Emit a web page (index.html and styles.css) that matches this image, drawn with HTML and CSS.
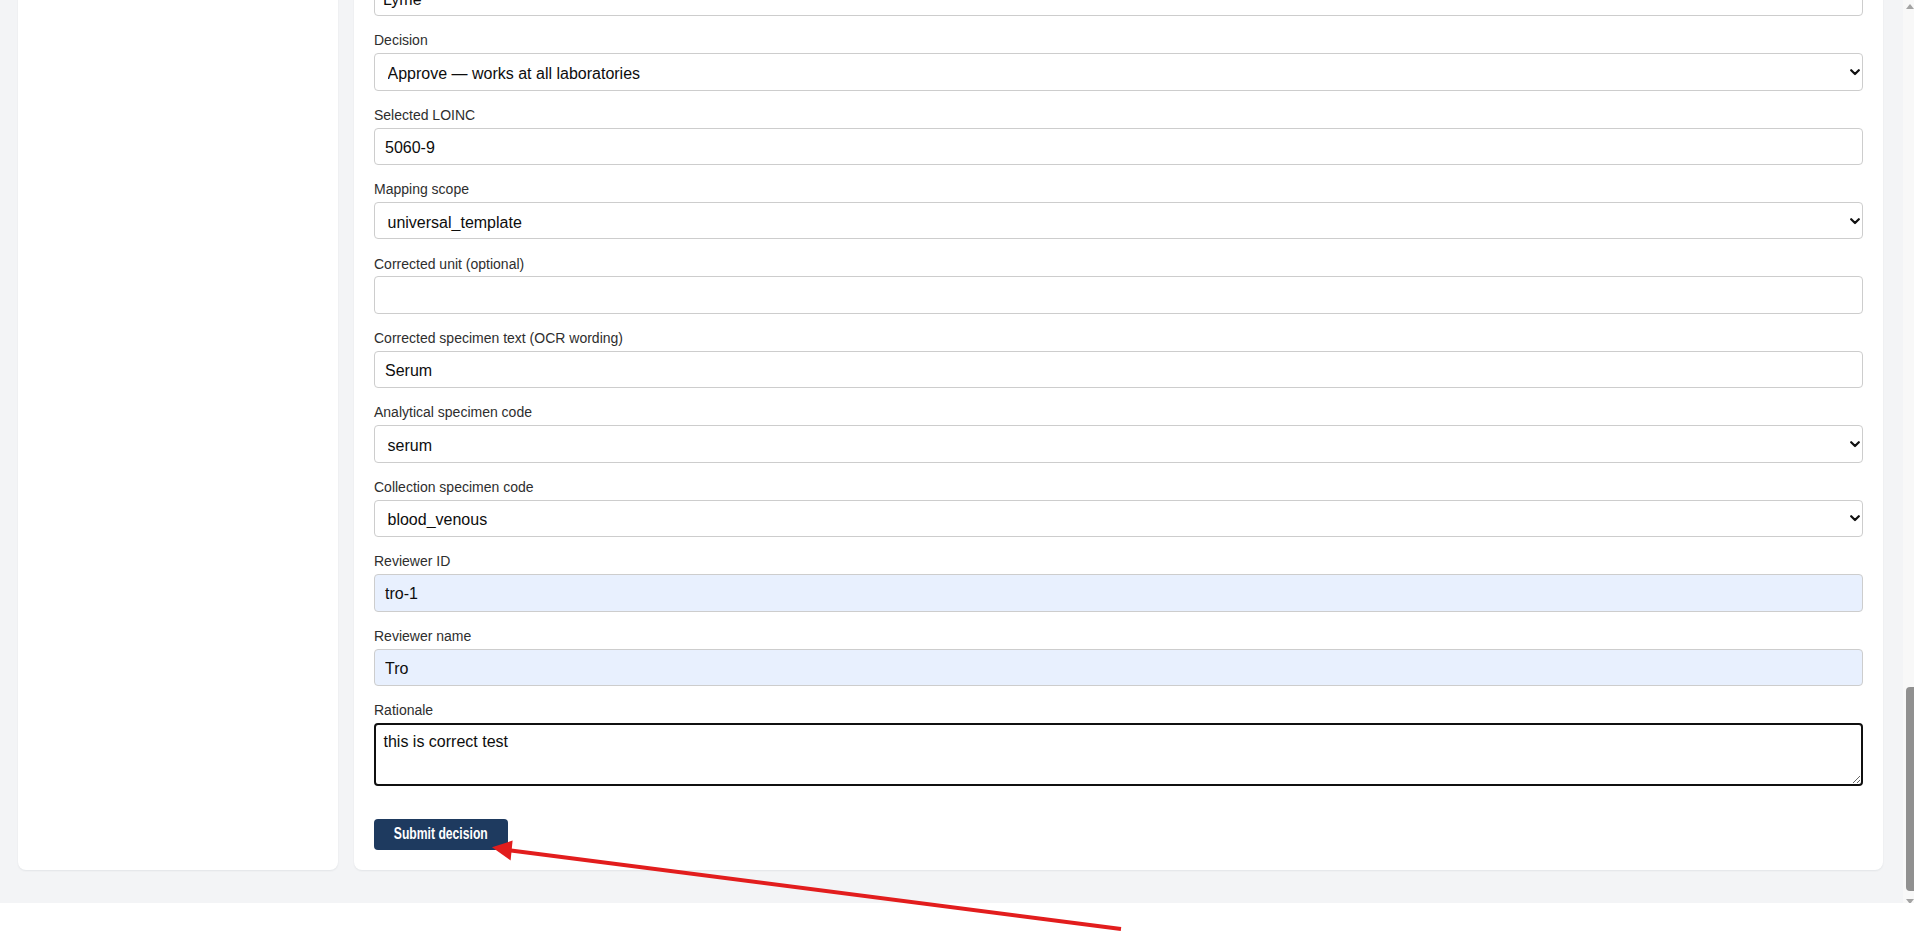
FILE: index.html
```html
<!DOCTYPE html>
<html lang="en">
<head>
<meta charset="utf-8">
<title>Review decision</title>
<link rel="stylesheet" href="styles.css">
</head>
<body>
<div class="screen">
  <div class="viewport">
    <div class="page">
      <div class="layout">
        <aside class="card sidebar"></aside>
        <main class="card main">
          <form class="form">
            <div class="field">
              <input class="control control-first" type="text" value="Lyme">
            </div>
            <div class="field">
              <label class="field-label">Decision</label>
              <div class="select-wrap">
                <select class="control control-select"><option>Approve — works at all laboratories</option></select>
                <svg class="chevron" viewBox="0 0 10 7"><path d="M1.2 1.2 L5 5 L8.8 1.2" fill="none" stroke="#111" stroke-width="2.2" stroke-linecap="round" stroke-linejoin="round"/></svg>
              </div>
            </div>
            <div class="field">
              <label class="field-label">Selected LOINC</label>
              <input class="control" type="text" value="5060-9">
            </div>
            <div class="field">
              <label class="field-label">Mapping scope</label>
              <div class="select-wrap">
                <select class="control control-select"><option>universal_template</option></select>
                <svg class="chevron" viewBox="0 0 10 7"><path d="M1.2 1.2 L5 5 L8.8 1.2" fill="none" stroke="#111" stroke-width="2.2" stroke-linecap="round" stroke-linejoin="round"/></svg>
              </div>
            </div>
            <div class="field">
              <label class="field-label">Corrected unit (optional)</label>
              <input class="control" type="text" value="">
            </div>
            <div class="field">
              <label class="field-label">Corrected specimen text (OCR wording)</label>
              <input class="control" type="text" value="Serum">
            </div>
            <div class="field">
              <label class="field-label">Analytical specimen code</label>
              <div class="select-wrap">
                <select class="control control-select"><option>serum</option></select>
                <svg class="chevron" viewBox="0 0 10 7"><path d="M1.2 1.2 L5 5 L8.8 1.2" fill="none" stroke="#111" stroke-width="2.2" stroke-linecap="round" stroke-linejoin="round"/></svg>
              </div>
            </div>
            <div class="field">
              <label class="field-label">Collection specimen code</label>
              <div class="select-wrap">
                <select class="control control-select"><option>blood_venous</option></select>
                <svg class="chevron" viewBox="0 0 10 7"><path d="M1.2 1.2 L5 5 L8.8 1.2" fill="none" stroke="#111" stroke-width="2.2" stroke-linecap="round" stroke-linejoin="round"/></svg>
              </div>
            </div>
            <div class="field">
              <label class="field-label">Reviewer ID</label>
              <input class="control control-filled" type="text" value="tro-1">
            </div>
            <div class="field">
              <label class="field-label">Reviewer name</label>
              <input class="control control-filled" type="text" value="Tro">
            </div>
            <div class="field">
              <label class="field-label">Rationale</label>
              <textarea class="control control-area">this is correct test</textarea>
            </div>
            <div class="actions">
              <button class="btn" type="button"><span class="btn-text">Submit decision</span></button>
            </div>
          </form>
        </main>
      </div>
    </div>
    <div class="scrollbar">
      <svg class="sb-arrow" viewBox="0 0 11 12"><polygon points="3,9 7,4 11,9" fill="#a3a3a3"/></svg>
      <div class="sb-space"></div>
      <div class="sb-thumb"></div>
      <svg class="sb-arrow" viewBox="0 0 11 12"><polygon points="3,8 11,8 7,13" fill="#a3a3a3"/></svg>
    </div>
  </div>
  <div class="strip"></div>
  <svg class="annotation" viewBox="0 0 1914 933">
    <line x1="1121" y1="929" x2="509" y2="850.3" stroke="#e21d1d" stroke-width="4"/>
    <polygon points="492,847.3 512.6,840.6 510.6,860.4" fill="#e21d1d"/>
  </svg>
</div>
</body>
</html>
```

FILE: styles.css
```css
html, body {
  margin: 0;
  padding: 0;
  background: #ffffff;
  font-family: "Liberation Sans", Arial, sans-serif;
}

.screen {
  position: relative;
  width: 1914px;
  height: 933px;
  overflow: hidden;
  background: #ffffff;
}

.viewport {
  display: flex;
  height: 903px;
}

.page {
  flex: 1;
  min-width: 0;
  background: #f3f4f6;
  overflow: hidden;
  display: flex;
  flex-direction: column;
  justify-content: flex-end;
  padding: 0 20px 33.3px 18px;
}

.layout {
  display: flex;
  gap: 16px;
  flex-shrink: 0;
}

.card {
  background: #ffffff;
  border-radius: 8px;
  box-shadow: 0 1px 2px rgba(16, 24, 40, 0.07);
}

.sidebar {
  width: 320px;
  flex-shrink: 0;
}

.main {
  flex: 1;
  min-width: 0;
  padding: 20px;
}

.form {
  display: flex;
  flex-direction: column;
  gap: 14.1px;
  margin: 0;
}

.field-label {
  display: block;
  font-size: 14px;
  line-height: 20px;
  margin-bottom: 2.85px;
  color: #2e2e2e;
}

.control {
  display: block;
  width: 100%;
  box-sizing: border-box;
  height: 37.5px;
  margin: 0;
  border: 1px solid #cdcdcd;
  border-radius: 4px;
  background: #ffffff;
  color: #0d0d0d;
  font-family: "Liberation Sans", Arial, sans-serif;
  font-size: 16px;
  padding: 3px 10px 0 10px;
  outline: none;
}

.control-first {
  padding: 6px 8px 0 8px;
}

.control-select {
  appearance: none;
  -webkit-appearance: none;
  padding-left: 12.5px;
  padding-right: 24px;
}

.control-filled {
  background: #e8f0fe;
}

.select-wrap {
  position: relative;
}

.chevron {
  position: absolute;
  right: 3.5px;
  top: 50%;
  width: 10px;
  height: 7px;
  margin-top: -3px;
  pointer-events: none;
}

.control-area {
  height: 62.7px;
  border: 2px solid #101010;
  padding: 8px 7.5px;
  line-height: 18px;
  resize: vertical;
}

.actions {
  margin-top: 18.9px;
}

.btn {
  display: flex;
  align-items: center;
  justify-content: center;
  width: 134px;
  height: 31px;
  padding: 0;
  border: 0;
  border-radius: 4px;
  background: #1e3a5f;
  color: #ffffff;
  cursor: pointer;
}

.btn-text {
  display: inline-block;
  font-family: "Liberation Sans", Arial, sans-serif;
  font-weight: bold;
  font-size: 16px;
  line-height: 18px;
  white-space: nowrap;
  transform: scaleX(0.76);
}

.scrollbar {
  width: 11px;
  flex-shrink: 0;
  background: #f8f8f8;
  display: flex;
  flex-direction: column;
}

.sb-arrow {
  display: block;
  width: 11px;
  height: 12px;
  flex-shrink: 0;
}

.sb-space {
  flex: 1;
}

.sb-thumb {
  height: 204px;
  margin-left: 3px;
  background: #909090;
  border-radius: 4px 0 0 4px;
  flex-shrink: 0;
}

.strip {
  height: 30px;
  background: #ffffff;
}

.annotation {
  position: absolute;
  left: 0;
  top: 0;
  width: 1914px;
  height: 933px;
  pointer-events: none;
}
```
